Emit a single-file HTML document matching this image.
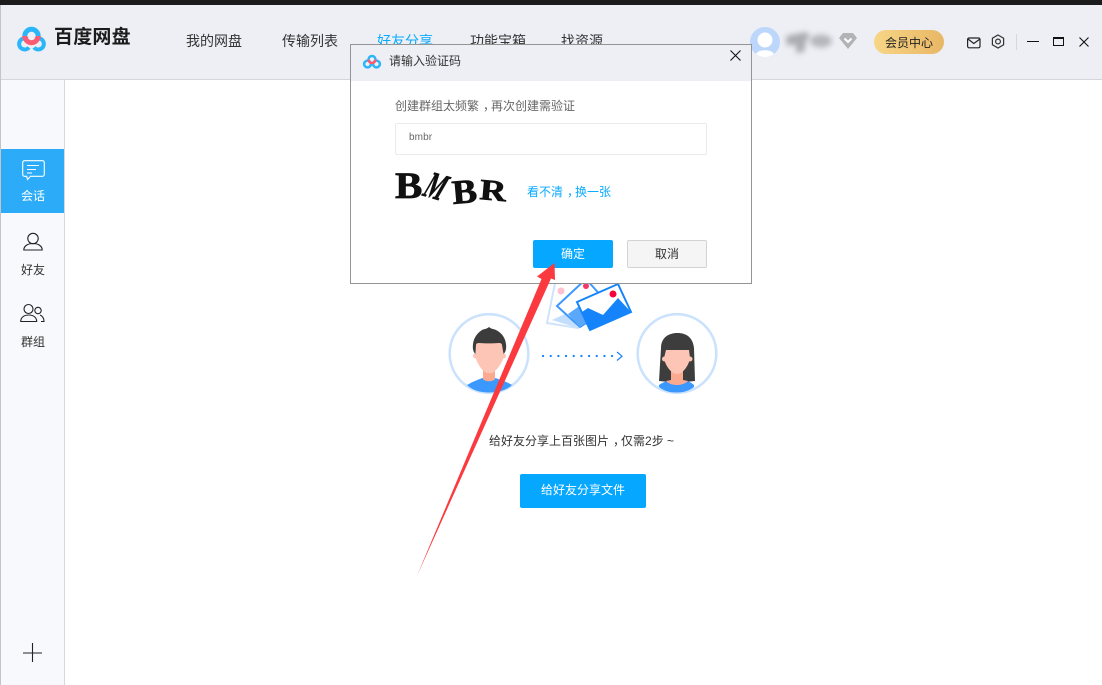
<!DOCTYPE html>
<html lang="zh-CN">
<head>
<meta charset="utf-8">
<title>百度网盘</title>
<style>
*{box-sizing:border-box;margin:0;padding:0}
html,body{width:1102px;height:685px;overflow:hidden;background:#fff}
body{position:relative;font-family:"Liberation Sans","Noto Sans CJK SC","WenQuanYi Zen Hei",sans-serif;color:#333}
.a{position:absolute}
.t{position:absolute;white-space:nowrap;line-height:1}
.c{display:inline-block;transform:translateX(4px)}
svg{position:absolute;overflow:visible}
</style>
</head>
<body>
<div class="a" style="left:0;top:0;width:1102px;height:5px;background:#1c1c1c"></div>
<div class="a" style="left:0;top:5px;width:1px;height:680px;background:#c4c4c4"></div>
<div class="a" style="left:1px;top:5px;width:1101px;height:75px;background:#edeff5;border-bottom:1px solid #d4d6dc"></div>
<div class="a" style="left:1px;top:80px;width:64px;height:605px;background:#f8f9fc;border-right:1px solid #d6d8de"></div>

<!-- logo -->
<svg style="left:0;top:0" width="60" height="60" viewBox="0 0 60 60">
<path d="M29 47.500a5.600 5.600 0 1 1-1.500-8.500" fill="none" stroke="#2bb6fb" stroke-width="4"/>
<path d="M34 47.500a5.600 5.600 0 1 0 1.500-8.500" fill="none" stroke="#2bb6fb" stroke-width="4"/>
<path d="M24.800 36a6.700 6.700 0 0 1 13.400 0" fill="none" stroke="#2bb6fb" stroke-width="5"/>
<path d="M24.800 36a6.700 6.700 0 0 0 13.400 0" fill="none" stroke="#fb5c73" stroke-width="5"/>
</svg>
<div class="t" style="left:54px;top:28px;font-size:19px;font-weight:700;color:#1c1c1c;letter-spacing:.2px">百度网盘</div>

<!-- nav -->
<div class="t" style="left:186px;top:34px;font-size:14px">我的网盘</div>
<div class="t" style="left:282px;top:34px;font-size:14px">传输列表</div>
<div class="t" style="left:377px;top:34px;font-size:14px;color:#09aaff">好友分享</div>
<div class="t" style="left:470px;top:34px;font-size:14px">功能宝箱</div>
<div class="t" style="left:561px;top:34px;font-size:14px">找资源</div>

<!-- user -->
<svg style="left:750px;top:27px" width="30" height="30" viewBox="0 0 30 30">
<circle cx="15" cy="15" r="15" fill="#bdd6fb"/>
<circle cx="15" cy="13" r="7.500" fill="#fff"/>
<path d="M6 27c2-5 16-5 18 0a15 15 0 0 1-18 0z" fill="#fff"/>
</svg>
<svg style="left:785px;top:28px" width="50" height="28" viewBox="0 0 50 28">
<defs><filter id="b" x="-30%" y="-60%" width="160%" height="220%"><feGaussianBlur stdDeviation="3"/></filter></defs>
<g filter="url(#b)">
<path d="M1 8l20-4 4 3-4 6-2 11-8 1 0-9-9 2z" fill="#a9abaf"/>
<ellipse cx="36" cy="13" rx="11" ry="6.500" fill="#b4b6bb"/>
</g>
</svg>
<svg style="left:838px;top:32px" width="20" height="18" viewBox="0 0 20 18">
<path d="M5 1h10l4 5-9 11L1 6z" fill="#b1b3b7"/>
<path d="M6.500 6.500L10 10l3.500-3.500" fill="none" stroke="#fff" stroke-width="2"/>
</svg>
<div class="a" style="left:874px;top:30px;width:70px;height:24px;border-radius:12px;background:linear-gradient(90deg,#f7d686,#e8b765)"></div>
<div class="t" style="left:885px;top:36.500px;font-size:12px;color:#222">会员中心</div>

<!-- window icons -->
<svg style="left:967px;top:37px" width="14" height="12" viewBox="0 0 14 12">
<rect x=".6" y="1" width="12.400" height="9.800" rx="1.500" fill="none" stroke="#222" stroke-width="1.200"/>
<path d="M1 2l5.800 4.500L13 2" fill="none" stroke="#222" stroke-width="1.200"/>
</svg>
<svg style="left:991px;top:34px" width="14" height="15" viewBox="0 0 14 15">
<path d="M7 1l5.600 3.200v6.600L7 14 1.400 10.800V4.200z" fill="none" stroke="#333" stroke-width="1.200"/>
<circle cx="7" cy="7.500" r="2.400" fill="none" stroke="#333" stroke-width="1.200"/>
</svg>
<div class="a" style="left:1016px;top:34px;width:1px;height:16px;background:#d5d7dc"></div>
<div class="a" style="left:1027px;top:41px;width:12px;height:1px;background:#111"></div>
<div class="a" style="left:1053px;top:37px;width:11px;height:9px;border:1px solid #111;border-top-width:2px"></div>
<svg style="left:1079px;top:37px" width="10" height="10" viewBox="0 0 10 10"><path d="M.5.500l9 9M9.500.500l-9 9" stroke="#111" stroke-width="1.100"/></svg>

<!-- sidebar -->
<div class="a" style="left:1px;top:149px;width:63px;height:64px;background:#2cacf8"></div>
<svg style="left:22px;top:160px" width="23" height="21" viewBox="0 0 23 21">
<path d="M2.500.7h18a1.800 1.800 0 0 1 1.800 1.800v12a1.800 1.800 0 0 1-1.800 1.800H8.500L5.500 19.500 4.700 16.300H2.500A1.800 1.800 0 0 1 .7 14.500v-12A1.800 1.800 0 0 1 2.500.7z" fill="none" stroke="#fff" stroke-width="1.100"/>
<path d="M5 5.500h12M5 9.500h9M5 13h5" stroke="#fff" stroke-width="1"/>
</svg>
<div class="t" style="left:21px;top:190px;font-size:12px;color:#fff">会话</div>
<svg style="left:23px;top:231px" width="20" height="20" viewBox="0 0 20 20">
<circle cx="10" cy="7.500" r="5.200" fill="none" stroke="#222" stroke-width="1.100"/>
<path d="M.8 19c0-4 4-6.500 9.200-6.500s9.200 2.500 9.200 6.500z" fill="none" stroke="#222" stroke-width="1.100"/>
</svg>
<div class="t" style="left:21px;top:264px;font-size:12px">好友</div>
<svg style="left:20px;top:303px" width="26" height="20" viewBox="0 0 26 20">
<circle cx="8.500" cy="6" r="4.500" fill="none" stroke="#222" stroke-width="1.100"/>
<path d="M.7 18.500c0-4 3.300-6.500 8-6.500s8 2.500 8 6.500z" fill="none" stroke="#222" stroke-width="1.100"/>
<circle cx="18" cy="7.500" r="3.200" fill="none" stroke="#222" stroke-width="1.100"/>
<path d="M20 12c2.500 1 4 3.500 4 6.500h-3" fill="none" stroke="#222" stroke-width="1.100"/>
</svg>
<div class="t" style="left:21px;top:336px;font-size:12px">群组</div>
<svg style="left:23px;top:643px" width="20" height="20" viewBox="0 0 20 20"><path d="M0 10h19M9.500 0v19" stroke="#222" stroke-width="1.100"/></svg>

<!-- illustration -->
<svg style="left:430px;top:270px" width="300" height="135" viewBox="0 0 300 135">
<circle cx="59" cy="83.500" r="39.300" fill="#fff" stroke="#cbe2fd" stroke-width="2.600"/>
<path d="M37 115c5-3 12-6 16-7h12c4 1 12 4 17 7-5 5-14 7.500-23 7.500s-17-2.500-22-7.500z" fill="#3b98ff"/>
<path d="M53 100h12v9c-2 3-10 3-12 0z" fill="#fba98f"/>
<path d="M46 72h27v17c-2 6-8 13-11 14h-5c-4-1-9-8-11-14z" fill="#fdc5b5"/>
<circle cx="45.500" cy="86" r="2.500" fill="#fdc5b5"/><circle cx="73.500" cy="86" r="2.500" fill="#fdc5b5"/>
<path d="M45.500 84c-2.500-2-3-6-2.500-10 1-8 6-12 9-14 2-1 5-1 7-3 2 2 5 2 7 3 4 2 9 6 10 14 .5 4 0 8-2.500 10l-1.500-9c0-1.500-1.500-2-3-2-6 .5-14 .5-20 0-1.500 0-3 .5-3 2z" fill="#3c3c3c"/>
<circle cx="247" cy="83.500" r="39.300" fill="#fff" stroke="#cbe2fd" stroke-width="2.600"/>
<path d="M231 78c0-10 7-15 16.500-15S263 68 264 78l1 33-10 1h-16l-10-1z" fill="#3d3d3d"/>
<path d="M229 115c4-3 9-4 13-5h11c4 1 8 2 11 5v2c-5 4-11 5.500-17.500 5.500S234 121 229 117z" fill="#3b98ff"/>
<path d="M241 100h12v10l5 1c-3 3-7 4-11 4s-8-1-11-4l5-1z" fill="#fba98f"/>
<path d="M236 80h23l1 8c-1 7-7 16-13 16s-12-9-13-16z" fill="#fdc5b5"/>
<circle cx="234.500" cy="89" r="2.500" fill="#fdc5b5"/><circle cx="260" cy="89" r="2.500" fill="#fdc5b5"/>
<path d="M113 86h70" stroke="#1584fb" stroke-width="2.200" stroke-linecap="round" stroke-dasharray=".1 7.570" fill="none"/>
<path d="M187 82l5 4.200-5 4.300" fill="none" stroke="#1584fb" stroke-width="1.200"/>
<path d="M125 13l-8 40 31 5 8-45z" fill="#fff" stroke="#cfe4fc" stroke-width="2"/>
<path d="M122 50l17-8 9 16z" fill="#c4defd"/>
<circle cx="131" cy="21" r="3.500" fill="#ffc0cf"/>
<path d="M127 36l29-27 25 28-31 20z" fill="#fff" stroke="#3b98ff" stroke-width="2"/>
<path d="M138 44l10-7 7 2 4 12-9 6z" fill="#5ba8fb"/>
<circle cx="156" cy="16" r="3" fill="#f5386b"/>
<path d="M147 32l41-18 13 28-41 18z" fill="#fff" stroke="#1584fb" stroke-width="2"/>
<path d="M152 42l6-4 15 7 15-17 13 14-41 18z" fill="#1584fb"/>
<circle cx="183" cy="24" r="3.500" fill="#f5023e"/>
</svg>

<div class="t" style="left:489px;top:435px;font-size:12px;color:#333">给好友分享上百张图片<span class="c">，</span>仅需2步 ~</div>
<div class="a" style="left:520px;top:474px;width:126px;height:34px;background:#06a7ff;border-radius:2px"></div>
<div class="t" style="left:541px;top:484px;font-size:12px;color:#fff">给好友分享文件</div>

<!-- dialog -->
<div class="a" style="left:350px;top:44px;width:402px;height:240px;background:#fff;border:1px solid #949494"></div>
<div class="a" style="left:351px;top:45px;width:400px;height:36px;background:#edeff5"></div>
<svg style="left:0;top:0" width="400" height="80" viewBox="0 0 400 80">
<circle cx="367.500" cy="64" r="3.400" fill="none" stroke="#2bb6fb" stroke-width="2.500"/>
<circle cx="376.500" cy="64" r="3.400" fill="none" stroke="#2bb6fb" stroke-width="2.500"/>
<path d="M368.500 59.500a3.500 3.500 0 0 1 7 0" fill="none" stroke="#2bb6fb" stroke-width="2.500"/>
<path d="M368.500 59.500a3.500 3.500 0 0 0 7 0" fill="none" stroke="#fb5c73" stroke-width="2.500"/>
</svg>
<div class="t" style="left:389px;top:55px;font-size:12px;color:#333">请输入验证码</div>
<svg style="left:730px;top:50px" width="11" height="11" viewBox="0 0 11 11"><path d="M.5.500l10 10M10.500.500l-10 10" stroke="#111" stroke-width="1.100"/></svg>
<div class="t" style="left:395px;top:100px;font-size:12px;color:#666">创建群组太频繁<span class="c">，</span>再次创建需验证</div>
<div class="a" style="left:395px;top:123px;width:312px;height:32px;background:#fff;border:1px solid #ebebeb;border-radius:2px"></div>
<div class="t" style="left:409px;top:133px;font-size:10px;color:#666;letter-spacing:.1px">bmbr</div>

<!-- captcha -->
<svg style="left:0;top:0" width="600" height="220" viewBox="0 0 600 220" font-family="Liberation Serif, serif" font-weight="700" fill="#111" stroke="#111" stroke-width=".7">
<text transform="translate(395,198) scale(1.080,.98)" font-size="38">B</text>
<text transform="translate(421,195) rotate(16) skewX(-14) scale(.62,1.200)" font-size="32">M</text>
<text transform="translate(453,204) rotate(-5) scale(1.100,1)" font-size="34">B</text>
<text transform="translate(479,199) rotate(5) scale(1.150,.92)" font-size="32">R</text>
</svg>
<div class="t" style="left:527px;top:186px;font-size:12px;color:#09aaff">看不清<span class="c">，</span>换一张</div>
<div class="a" style="left:533px;top:240px;width:80px;height:28px;background:#06a7ff;border-radius:2px"></div>
<div class="t" style="left:561px;top:248px;font-size:12px;color:#fff">确定</div>
<div class="a" style="left:627px;top:240px;width:80px;height:28px;background:#f5f5f5;border:1px solid #d3d3d3;border-radius:2px"></div>
<div class="t" style="left:655px;top:248px;font-size:12px;color:#333">取消</div>

<!-- red arrow -->
<svg style="left:0;top:0" width="1102" height="685" viewBox="0 0 1102 685">
<path d="M416.500 577L541.500 279 537 276.500 554.500 263 555 280 551 278.500z" fill="#fb3a3f"/>
</svg>
</body>
</html>
